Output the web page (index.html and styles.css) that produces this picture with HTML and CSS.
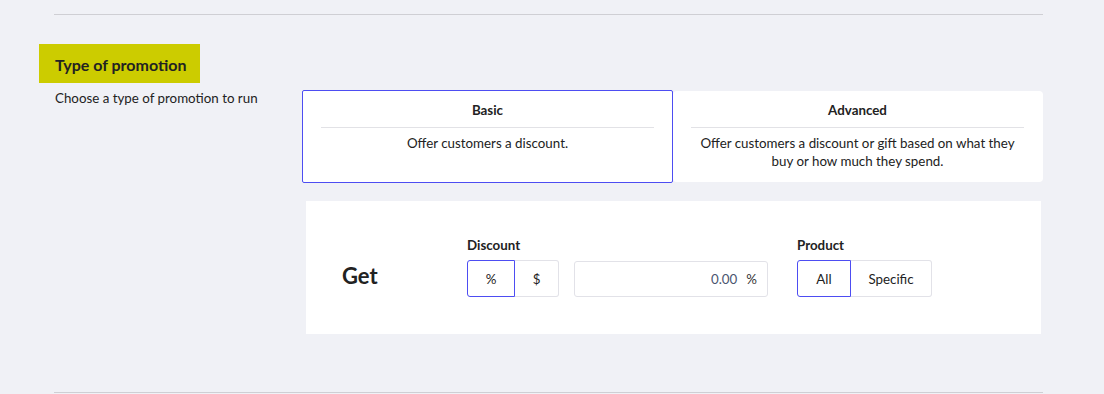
FILE: index.html
```html
<!DOCTYPE html>
<html lang="en">
<head>
    <meta charset="UTF-8">
    <title>Promotion</title>
    <link rel="stylesheet" href="styles.css">
</head>
<body>
    <div class="page">
        <div class="rule"></div>

        <h2 class="section-title">Type of promotion</h2>

        <div class="section-row">
            <p class="section-hint">Choose a type of promotion to run</p>

            <div class="section-body">
                <div class="type-cards">
                    <div class="type-card selected">
                        <div class="type-card-title">Basic</div>
                        <div class="type-card-desc">Offer customers a discount.</div>
                    </div>
                    <div class="type-card">
                        <div class="type-card-title">Advanced</div>
                        <div class="type-card-desc">Offer customers a discount or gift based on what they buy or how much they spend.</div>
                    </div>
                </div>

                <div class="get-panel">
                    <div class="get-label">Get</div>

                    <div class="field">
                        <label class="field-label">Discount</label>
                        <div class="field-row">
                            <div class="segmented">
                                <button class="seg seg-pct active">%</button>
                                <button class="seg seg-usd">$</button>
                            </div>
                            <div class="amount-input">
                                <span class="amount-value">0.00</span>
                                <span class="amount-unit">%</span>
                            </div>
                        </div>
                    </div>

                    <div class="field field-product">
                        <label class="field-label">Product</label>
                        <div class="segmented">
                            <button class="seg seg-all active">All</button>
                            <button class="seg seg-specific">Specific</button>
                        </div>
                    </div>
                </div>
            </div>
        </div>

        <div class="rule rule-bottom"></div>
    </div>
</body>
</html>
```

FILE: styles.css
```css
body {
    margin: 0;
    font-family: Lato, 'Noto Sans', sans-serif;
    background-color: #f0f1f6;
    color: #222;
}

.page {
    padding: 14px 61px 0 54px;
}

.rule {
    border-top: 1px solid #cfcfd4;
}

.rule-bottom {
    margin-top: 58px;
}

.section-title {
    display: inline-block;
    margin: 29px 0 0 -15px;
    padding: 0 14px 0 16px;
    height: 39px;
    line-height: 42px;
    font-size: 16px;
    font-weight: 700;
    background-color: #cccc00;
    color: #222;
}

.section-row {
    display: grid;
    grid-template-columns: 249px 1fr;
    margin-top: 7px;
}

.section-hint {
    margin: 0 0 0 1px;
    font-size: 13.33px;
    line-height: 16px;
}

.type-cards {
    display: grid;
    grid-template-columns: 370px 1fr;
    margin-top: 1px;
}

.type-card {
    background: white;
    border-radius: 4px;
    padding: 11px 19px 0 18px;
    height: 91px;
    box-sizing: border-box;
    text-align: center;
}

.type-card.selected {
    border: 1px solid #4d4df2;
    border-radius: 2px;
    margin: -1px 0 -1px -1px;
    height: 93px;
    padding: 11px 18px 0 18px;
    position: relative;
    z-index: 1;
}

.type-card-title {
    font-size: 13.33px;
    font-weight: 700;
    line-height: 16px;
    padding-bottom: 9px;
    border-bottom: 1px solid #e2e2e6;
}

.type-card-desc {
    margin-top: 6px;
    font-size: 13.33px;
    line-height: 18px;
}

.get-panel {
    display: flex;
    align-items: flex-end;
    background: white;
    margin: 19px 2px 0 3px;
    padding: 36px 0 37px 36px;
}

.get-label {
    width: 125px;
    font-size: 22px;
    font-weight: 700;
    line-height: 37px;
    height: 37px;
    margin-bottom: 3px;
}

.field-label {
    display: block;
    font-size: 13.33px;
    font-weight: 700;
    line-height: 16px;
    margin-bottom: 7px;
}

.field-row {
    display: flex;
    gap: 15px;
}

.field-product {
    margin-left: 29px;
}

.segmented {
    display: flex;
    height: 37px;
}

.seg {
    font-family: inherit;
    font-size: 13.33px;
    color: #222;
    background: white;
    border: 1px solid #e2e2e8;
    padding: 0;
    cursor: pointer;
}

.seg:first-child {
    border-radius: 3px 0 0 3px;
}

.seg:last-child {
    border-left: none;
    border-radius: 0 3px 3px 0;
}

.seg.active {
    border-color: #4d4df2;
}

.seg-pct { width: 48px; }
.seg-usd { width: 44px; }
.seg-all { width: 54px; }
.seg-specific { width: 81px; }

.amount-input {
    display: flex;
    align-items: center;
    justify-content: flex-end;
    gap: 9px;
    width: 194px;
    height: 36px;
    margin-top: 1px;
    box-sizing: border-box;
    padding-right: 10px;
    border: 1px solid #e2e2e8;
    border-radius: 3px;
    font-size: 13.33px;
}

.amount-value {
    color: #4a5570;
}

.amount-unit {
    color: #333;
}
```
